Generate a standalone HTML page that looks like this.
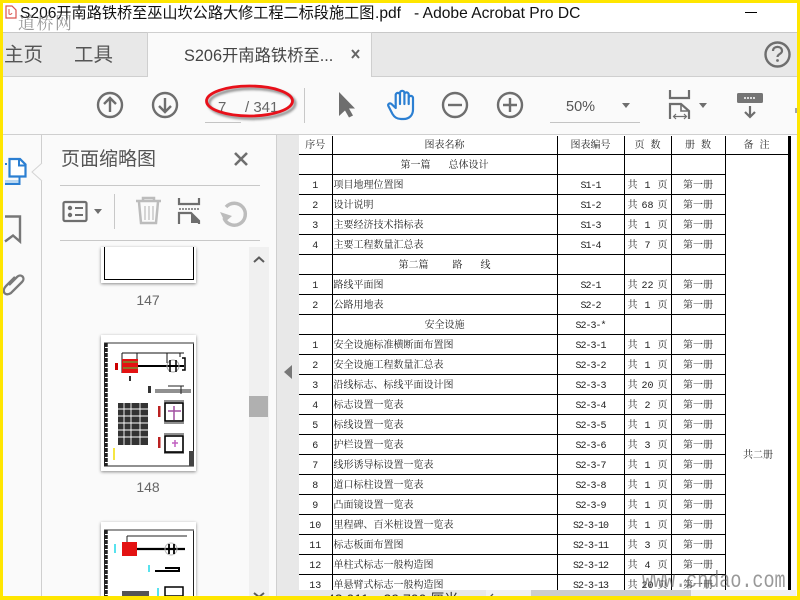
<!DOCTYPE html>
<html><head><meta charset="utf-8">
<style>
html,body{margin:0;padding:0;width:800px;height:600px;overflow:hidden;background:#fafafa}
*{box-sizing:border-box}
.a{position:absolute}
body{font-family:"Liberation Sans","Noto Sans CJK SC",sans-serif}
#pg{position:absolute;left:299px;top:135px;width:497px;height:455px;background:#fff;overflow:hidden}
table{margin-top:1px;border-collapse:collapse;table-layout:fixed;width:490px;font-family:"Liberation Mono","Noto Serif CJK SC",serif;font-size:10px;color:#222}
td{border:1.4px solid #000;height:20px;padding:5px 0 0;text-align:center;white-space:nowrap;line-height:12px;overflow:hidden}
tr:first-child td{border-top:0;height:18px}
td:first-child{border-left:0}
td.r{border-right:3px solid #000}
.n{text-align:left;padding-left:1px}
.c{letter-spacing:-1px}
.p{text-align:left;padding:5px 3px 0}
.p i{font-style:normal;display:flex;justify-content:space-between}
</style></head><body>
<!-- window chrome -->
<div class="a" style="left:0;top:0;width:800px;height:33px;background:#fff;border-bottom:1px solid #c8c8c8"></div>
<div class="a" style="left:0;top:33px;width:800px;height:44px;background:#e8e8e8;border-bottom:1px solid #cfcfcf"></div>
<div class="a" style="left:147px;top:32px;width:225px;height:45px;background:#fafafa;border-left:1px solid #cfcfcf;border-right:1px solid #cfcfcf;border-top:1px solid #cfcfcf"></div>
<div class="a" style="left:0;top:77px;width:800px;height:58px;background:#fafafa;border-bottom:1px solid #cfcfcf"></div>

<div class="a" style="left:20px;top:3px;font-size:15.6px;line-height:22px;color:#111;white-space:nowrap">S206<span style="font-size:15.15px">开南路铁桥至巫山坎公路大修工程二标段施工图</span></div>
<div class="a" style="left:375px;top:3px;font-size:15.6px;line-height:22px;color:#111;white-space:nowrap">.pdf</div>
<div class="a" style="left:414px;top:3px;font-size:15.6px;line-height:22px;color:#111;white-space:nowrap">- Adobe Acrobat Pro DC</div>
<div class="a" style="left:18px;top:11px;font-family:'Noto Serif CJK SC',serif;font-size:17px;line-height:22px;letter-spacing:1.5px;color:rgba(110,110,110,.7);white-space:nowrap">道桥网</div>
<div class="a" style="left:745px;top:12px;width:12px;height:1px;background:#000"></div>

<div class="a" style="left:4px;top:43px;font-size:19.5px;line-height:24px;color:#555">主页</div>
<div class="a" style="left:74px;top:43px;font-size:19.5px;line-height:24px;color:#555">工具</div>
<div class="a" style="left:184px;top:45px;font-size:16.3px;line-height:22px;color:#444;white-space:nowrap">S206开南路铁桥至...</div>

<!-- panels -->
<div class="a" style="left:41px;top:135px;width:1px;height:465px;background:#cfcfcf"></div>
<div class="a" style="left:276px;top:135px;width:23px;height:465px;background:#e8e8e8;border-left:1px solid #cfcfcf"></div>
<div class="a" style="left:249px;top:247px;width:20px;height:353px;background:#f0f0f0"></div>
<div class="a" style="left:60px;top:185px;width:200px;height:1px;background:#c8c8c8"></div>
<div class="a" style="left:60px;top:240px;width:200px;height:1px;background:#c8c8c8"></div>
<div class="a" style="left:61px;top:147px;font-size:19px;line-height:26px;color:#555;white-space:nowrap">页面缩略图</div>

<!-- thumbs -->
<div class="a" style="left:101px;top:247px;width:95px;height:36px;background:#fff;box-shadow:0 1px 3px rgba(0,0,0,.45)"></div>
<div class="a" style="left:104px;top:247px;width:90px;height:33px;border:1px solid #000;border-top:0"></div>
<div class="a" style="left:101px;top:335px;width:95px;height:136px;background:#fff;box-shadow:0 1px 3px rgba(0,0,0,.45)"></div>
<div class="a" style="left:101px;top:522px;width:95px;height:74px;background:#fff;box-shadow:0 1px 3px rgba(0,0,0,.45)"></div>
<div class="a" style="left:128px;top:292px;font-size:14px;line-height:17px;color:#666;width:40px;text-align:center">147</div>
<div class="a" style="left:128px;top:479px;font-size:14px;line-height:17px;color:#666;width:40px;text-align:center">148</div>
<div class="a" style="left:249px;top:396px;width:19px;height:21px;background:#b0b0b0"></div>

<!-- document page -->
<div id="pg">
<table>
<colgroup><col style="width:33px"><col style="width:225px"><col style="width:67px"><col style="width:47px"><col style="width:54px"><col style="width:64px"></colgroup>
<tr><td>序号</td><td>图表名称</td><td>图表编号</td><td>页&nbsp;数</td><td>册&nbsp;数</td><td class="r">备&nbsp;注</td></tr>
<tr><td></td><td>第一篇&nbsp;&nbsp;&nbsp;总体设计</td><td></td><td></td><td></td><td rowspan="24" class="r"></td></tr>
<tr><td>1</td><td class="n">项目地理位置图</td><td class="c">S1-1</td><td class="p"><i><span>共</span><span>1</span><span>页</span></i></td><td>第一册</td></tr>
<tr><td>2</td><td class="n">设计说明</td><td class="c">S1-2</td><td class="p"><i><span>共</span><span>68</span><span>页</span></i></td><td>第一册</td></tr>
<tr><td>3</td><td class="n">主要经济技术指标表</td><td class="c">S1-3</td><td class="p"><i><span>共</span><span>1</span><span>页</span></i></td><td>第一册</td></tr>
<tr><td>4</td><td class="n">主要工程数量汇总表</td><td class="c">S1-4</td><td class="p"><i><span>共</span><span>7</span><span>页</span></i></td><td>第一册</td></tr>
<tr><td></td><td>第二篇&nbsp;&nbsp;&nbsp;&nbsp;路&nbsp;&nbsp;&nbsp;线</td><td></td><td></td><td></td></tr>
<tr><td>1</td><td class="n">路线平面图</td><td class="c">S2-1</td><td class="p"><i><span>共</span><span>22</span><span>页</span></i></td><td>第一册</td></tr>
<tr><td>2</td><td class="n">公路用地表</td><td class="c">S2-2</td><td class="p"><i><span>共</span><span>1</span><span>页</span></i></td><td>第一册</td></tr>
<tr><td></td><td>安全设施</td><td class="c">S2-3-*</td><td></td><td></td></tr>
<tr><td>1</td><td class="n">安全设施标准横断面布置图</td><td class="c">S2-3-1</td><td class="p"><i><span>共</span><span>1</span><span>页</span></i></td><td>第一册</td></tr>
<tr><td>2</td><td class="n">安全设施工程数量汇总表</td><td class="c">S2-3-2</td><td class="p"><i><span>共</span><span>1</span><span>页</span></i></td><td>第一册</td></tr>
<tr><td>3</td><td class="n">沿线标志、标线平面设计图</td><td class="c">S2-3-3</td><td class="p"><i><span>共</span><span>20</span><span>页</span></i></td><td>第一册</td></tr>
<tr><td>4</td><td class="n">标志设置一览表</td><td class="c">S2-3-4</td><td class="p"><i><span>共</span><span>2</span><span>页</span></i></td><td>第一册</td></tr>
<tr><td>5</td><td class="n">标线设置一览表</td><td class="c">S2-3-5</td><td class="p"><i><span>共</span><span>1</span><span>页</span></i></td><td>第一册</td></tr>
<tr><td>6</td><td class="n">护栏设置一览表</td><td class="c">S2-3-6</td><td class="p"><i><span>共</span><span>3</span><span>页</span></i></td><td>第一册</td></tr>
<tr><td>7</td><td class="n">线形诱导标设置一览表</td><td class="c">S2-3-7</td><td class="p"><i><span>共</span><span>1</span><span>页</span></i></td><td>第一册</td></tr>
<tr><td>8</td><td class="n">道口标柱设置一览表</td><td class="c">S2-3-8</td><td class="p"><i><span>共</span><span>1</span><span>页</span></i></td><td>第一册</td></tr>
<tr><td>9</td><td class="n">凸面镜设置一览表</td><td class="c">S2-3-9</td><td class="p"><i><span>共</span><span>1</span><span>页</span></i></td><td>第一册</td></tr>
<tr><td>10</td><td class="n">里程碑、百米桩设置一览表</td><td class="c">S2-3-10</td><td class="p"><i><span>共</span><span>1</span><span>页</span></i></td><td>第一册</td></tr>
<tr><td>11</td><td class="n">标志板面布置图</td><td class="c">S2-3-11</td><td class="p"><i><span>共</span><span>3</span><span>页</span></i></td><td>第一册</td></tr>
<tr><td>12</td><td class="n">单柱式标志一般构造图</td><td class="c">S2-3-12</td><td class="p"><i><span>共</span><span>4</span><span>页</span></i></td><td>第一册</td></tr>
<tr><td>13</td><td class="n">单悬臂式标志一般构造图</td><td class="c">S2-3-13</td><td class="p"><i><span>共</span><span>20</span><span>页</span></i></td><td>第一册</td></tr>
<tr><td></td><td></td><td></td><td></td><td></td></tr>
</table>
<div class="a" style="left:444px;top:313px;font-family:'Noto Serif CJK SC',serif;font-size:10px;line-height:12px;color:#222;white-space:nowrap">共二册</div>
<div class="a" style="left:489px;top:0;width:2px;height:2px"></div>
</div>

<!-- status bar -->
<div class="a" style="left:299px;top:590px;width:497px;height:10px;background:#f1f1f1;overflow:hidden"></div>
<div class="a" style="left:299px;top:590px;width:187px;height:10px;background:#e8e8e8;overflow:hidden"><div class="a" style="left:28px;top:0;font-size:14px;line-height:18px;color:#333;white-space:nowrap">42.011 x 29.700 厘米</div></div>
<div class="a" style="left:531px;top:590px;width:160px;height:10px;background:#cdcdcd"></div>
<div class="a" style="left:642px;top:569px;font-family:'Liberation Mono',monospace;font-size:23px;line-height:24px;color:rgba(90,90,90,.62);white-space:nowrap;transform-origin:0 50%;transform:scale(.8,1)">www.cndao.com</div>

<svg class="a" style="left:0;top:0" width="800" height="600" viewBox="0 0 800 600" fill="none">
<defs><filter id="b" x="-10%" y="-30%" width="120%" height="160%"><feGaussianBlur stdDeviation="1.200"/></filter></defs>
<!-- pdf icon -->
<path d="M6 6h6l4 4v8H6z" stroke="#d9534f" stroke-width="1.2" fill="#fff"/>
<path d="M9 9v5a2 2 0 0 0 3-1" stroke="#d9534f" stroke-width="1"/>
<!-- tab close -->
<path d="M352 50l7 8M359 50l-7 8" stroke="#666" stroke-width="2"/>
<!-- help -->
<circle cx="777.5" cy="54.5" r="12" stroke="#6e6e6e" stroke-width="2.4"/>
<path d="M773 51c0-5.500 9-5.500 9 0 0 3-4.500 3-4.500 6" stroke="#6e6e6e" stroke-width="2.200"/>
<circle cx="777.500" cy="60.500" r="1.400" fill="#6e6e6e"/>
<!-- nav up/down -->
<g stroke="#6e6e6e" stroke-width="2.400">
<circle cx="110" cy="105" r="12"/>
<path d="M110 112V98M104 104l6-6 6 6"/>
<circle cx="165" cy="105" r="12"/>
<path d="M165 98v14M159 106l6 6 6-6"/>
</g>
<text x="218" y="112" font-family="Liberation Sans,sans-serif" font-size="15" fill="#666">7</text>
<text x="245" y="112" font-family="Liberation Sans,sans-serif" font-size="15" fill="#666">/ 341</text>
<path d="M205 122.500h36" stroke="#c4c4c4"/>
<!-- red ellipse -->
<ellipse cx="252" cy="103.500" rx="43" ry="15" stroke="rgba(0,0,0,.5)" stroke-width="2.500" filter="url(#b)"/>
<ellipse cx="249.500" cy="101" rx="43" ry="15" stroke="#e8101a" stroke-width="2.800"/>
<path d="M304.500 88v35" stroke="#c8c8c8"/>
<!-- cursor -->
<path d="M339 92v24l6-5.500 4 7 4-2-4-7h6z" fill="#6e6e6e"/>
<!-- hand -->
<path d="M395.700 108l-4.200-4c-1.700-1.600-4.200.2-3 2.300l4 7.700c2 3.500 4.500 5 8.500 5h2.500c6 0 9.500-4 9.500-9.500V98a2.150 2.150 0 0 0-4.300 0v6-9.500a2.150 2.150 0 0 0-4.300 0v9.500-11a2.150 2.150 0 0 0-4.400 0v11-9a2.150 2.150 0 0 0-4.300 0z" stroke="#2b7fd2" stroke-width="2.200" stroke-linejoin="round" stroke-linecap="round"/>
<!-- zoom -->
<g stroke="#6e6e6e" stroke-width="2.400">
<circle cx="455" cy="105" r="12"/><path d="M448 105h14"/>
<circle cx="510" cy="105" r="12"/><path d="M503 105h14M510 98v14"/>
</g>
<text x="566" y="111" font-family="Liberation Sans,sans-serif" font-size="14.500" fill="#555">50%</text>
<path d="M622 103h8l-4 5z" fill="#6e6e6e"/>
<path d="M550 122.500h90" stroke="#c4c4c4"/>
<!-- fit width -->
<path d="M670 90v8h19v-8M670 119v-15h11l8 7v8" stroke="#6e6e6e" stroke-width="2.200"/>
<path d="M681 104v7h8" stroke="#6e6e6e" stroke-width="1.600"/>
<path d="M674 116.500h12M676 114l-2.500 2.500 2.500 2.500M684 114l2.500 2.500-2.500 2.500" stroke="#6e6e6e" stroke-width="1.200"/>
<path d="M699 103h8l-4 5z" fill="#6e6e6e"/>
<!-- read mode -->
<rect x="737" y="93" width="26" height="10" rx="1.500" fill="#757575"/>
<path d="M744 98h12" stroke="#fff" stroke-width="1.600" stroke-dasharray="2 1"/>
<path d="M750 106v11M745 112l5 5 5-5" stroke="#6e6e6e" stroke-width="2.200"/>
<path d="M796 108v5" stroke="#888" stroke-width="1.500"/>
<!-- left nav -->
<rect x="5" y="180" width="14" height="3" fill="#b9d7f1"/>
<path d="M9.500 176.500V159h10.500l5.500 5.500v12z" stroke="#2b7fd2" stroke-width="2.200" fill="#fff"/>
<path d="M19 159v6.500h6.500" stroke="#2b7fd2" stroke-width="2"/>
<path d="M5 184h14.500v-7" stroke="#2b7fd2" stroke-width="2"/>
<rect x="5" y="163" width="2" height="2" fill="#2b7fd2"/>
<path d="M5 216.500h15v25l-7-6-8 6" stroke="#777" stroke-width="2.400"/>
<path d="M9 285l8-8c4-4 9 1 5 5l-11 11c-6 4-10-2-5-7l9-9" stroke="#7a7a7a" stroke-width="2.300"/>
<path d="M42 163l-10 9 10 9" fill="#fafafa" stroke="#d4d4d4"/>
<path d="M42.500 164v16" stroke="#fafafa" stroke-width="1.500"/>
<!-- panel close -->
<path d="M235 153l12 12M247 153l-12 12" stroke="#6e6e6e" stroke-width="2.600"/>
<!-- panel tools -->
<rect x="63.500" y="202" width="23" height="19" rx="1.500" stroke="#6e6e6e" stroke-width="2.200"/>
<circle cx="70" cy="208" r="2.200" fill="#6e6e6e"/><circle cx="70" cy="215" r="2.200" fill="#6e6e6e"/>
<path d="M75 208h8M75 215h8" stroke="#6e6e6e" stroke-width="2"/>
<path d="M94 209h8l-4 5z" fill="#6e6e6e"/>
<path d="M114.500 194v35" stroke="#c8c8c8"/>
<g stroke="#bcbcbc" stroke-width="2.500">
<path d="M136 201h25M143 201v-3h11v3M139 202l2 21h15l2-21"/>
<path d="M145 206v14M149 206v14M153 206v14" stroke-width="1.200"/>
</g>
<path d="M179 198v6h20v-6" stroke="#6e6e6e" stroke-width="2.200"/>
<path d="M179 209h21" stroke="#6e6e6e" stroke-width="1.600" stroke-dasharray="2 1"/>
<path d="M179 224v-11h12l8 8v3" stroke="#6e6e6e" stroke-width="2.200"/>
<path d="M191 213v10h9z" fill="#6e6e6e"/>
<path d="M224 218a11 11 0 1 0 2-11" stroke="#bcbcbc" stroke-width="3.500"/>
<path d="M220 212l5 10 7-6z" fill="#bcbcbc"/>
<!-- scroll chevrons -->
<path d="M254 262l5-4.500 5 4.500" stroke="#5c5c5c" stroke-width="2"/>
<path d="M254 593l5 4 5-4" stroke="#5c5c5c" stroke-width="2"/>
<path d="M292 365v14l-8-7z" fill="#777"/>
<path d="M493 594l-3 3 3 3" stroke="#555" stroke-width="1.300"/>
<!-- thumb 148 -->
<g>
<rect x="104.500" y="343" width="89" height="123" stroke="#222" stroke-width="1"/>
<path d="M104 343h90" stroke="#777" stroke-width="1.500"/>
<path d="M106 343v123" stroke="#222" stroke-width="3.500" stroke-dasharray="4 1"/>
<path d="M122 353h62M122 353v20M137 353v20M167 353v10M180 353v4" stroke="#111"/>
<path d="M138 366h46" stroke="#000" stroke-width="2"/>
<rect x="122" y="359" width="16" height="14" fill="#e31212"/>
<path d="M123 362h15M123 368h15" stroke="#3fd43f" stroke-width="1"/>
<rect x="115" y="363" width="3" height="7" fill="#c00"/>
<circle cx="173" cy="366" r="6" stroke="#aaa"/>
<path d="M170 360v12M176 360v12M182 358h3v12h-3" stroke="#000" stroke-width="1.500"/>
<rect x="129" y="376" width="2" height="5" fill="#333"/>
<path d="M149.500 386v7" stroke="#333" stroke-width="3"/>
<path d="M155 390h36M155 392h36M168 386h16M181 386v8" stroke="#222"/>
<rect x="118" y="403" width="30" height="42" fill="#333"/>
<path d="M118 409h30M118 416h30M118 423h30M118 430h30M118 437h30M124 403v42M131 403v42M140 403v42" stroke="#fff" stroke-width=".9"/>
<rect x="158" y="406" width="2.500" height="11" fill="#b22"/>
<rect x="165" y="403" width="18" height="18" stroke="#000" stroke-width="1.600"/>
<path d="M174 406v14M168 411h13" stroke="#a04fa0" stroke-width="1.500"/>
<path d="M164 401h20M164 423h20" stroke="#222"/>
<rect x="158" y="437" width="2.500" height="11" fill="#b22"/>
<rect x="165" y="436" width="18" height="16" stroke="#000" stroke-width="1.600"/>
<path d="M172 443h6M175 440v7" stroke="#c060c0" stroke-width="1.500"/>
<path d="M164 434h20M164 453h20" stroke="#222"/>
<path d="M114 448v12" stroke="#f5e642" stroke-width="2"/>
<rect x="189" y="451" width="5" height="15" fill="#444"/>
</g>
<!-- thumb 149 -->
<g>
<path d="M104.500 596V530h89v66" stroke="#222"/>
<path d="M104 530h90" stroke="#777" stroke-width="1.500"/>
<path d="M106 530v66" stroke="#222" stroke-width="3.500" stroke-dasharray="4 1"/>
<rect x="122" y="542" width="15" height="14" fill="#e31212"/>
<path d="M127 536h60M127 536v6" stroke="#222"/>
<path d="M137 549h48" stroke="#000" stroke-width="2.200"/>
<path d="M115 544v9" stroke="#20d8e8" stroke-width="1.500"/>
<circle cx="171" cy="549" r="6" stroke="#bbb"/>
<path d="M169 544v10M174 544v10" stroke="#000" stroke-width="1.800"/>
<path d="M149 565v7" stroke="#20d8e8" stroke-width="1.500"/>
<path d="M155 571h24" stroke="#000" stroke-width="2"/><path d="M165 568h14v4" stroke="#000" stroke-width="2"/>
<rect x="122" y="591" width="27" height="5" fill="#555"/>
<path d="M158 588v8" stroke="#20d8e8" stroke-width="1.500"/>
<rect x="165" y="587" width="18" height="9" stroke="#000" stroke-width="1.500"/>
</g>
</svg>

<!-- yellow frame -->
<div class="a" style="left:0;top:0;width:800px;height:3px;background:#ffe600"></div>
<div class="a" style="left:0;top:596px;width:800px;height:4px;background:#ffe600"></div>
<div class="a" style="left:0;top:0;width:3px;height:600px;background:#ffe600"></div>
<div class="a" style="left:797px;top:0;width:3px;height:600px;background:#ffe600"></div>
</body></html>
